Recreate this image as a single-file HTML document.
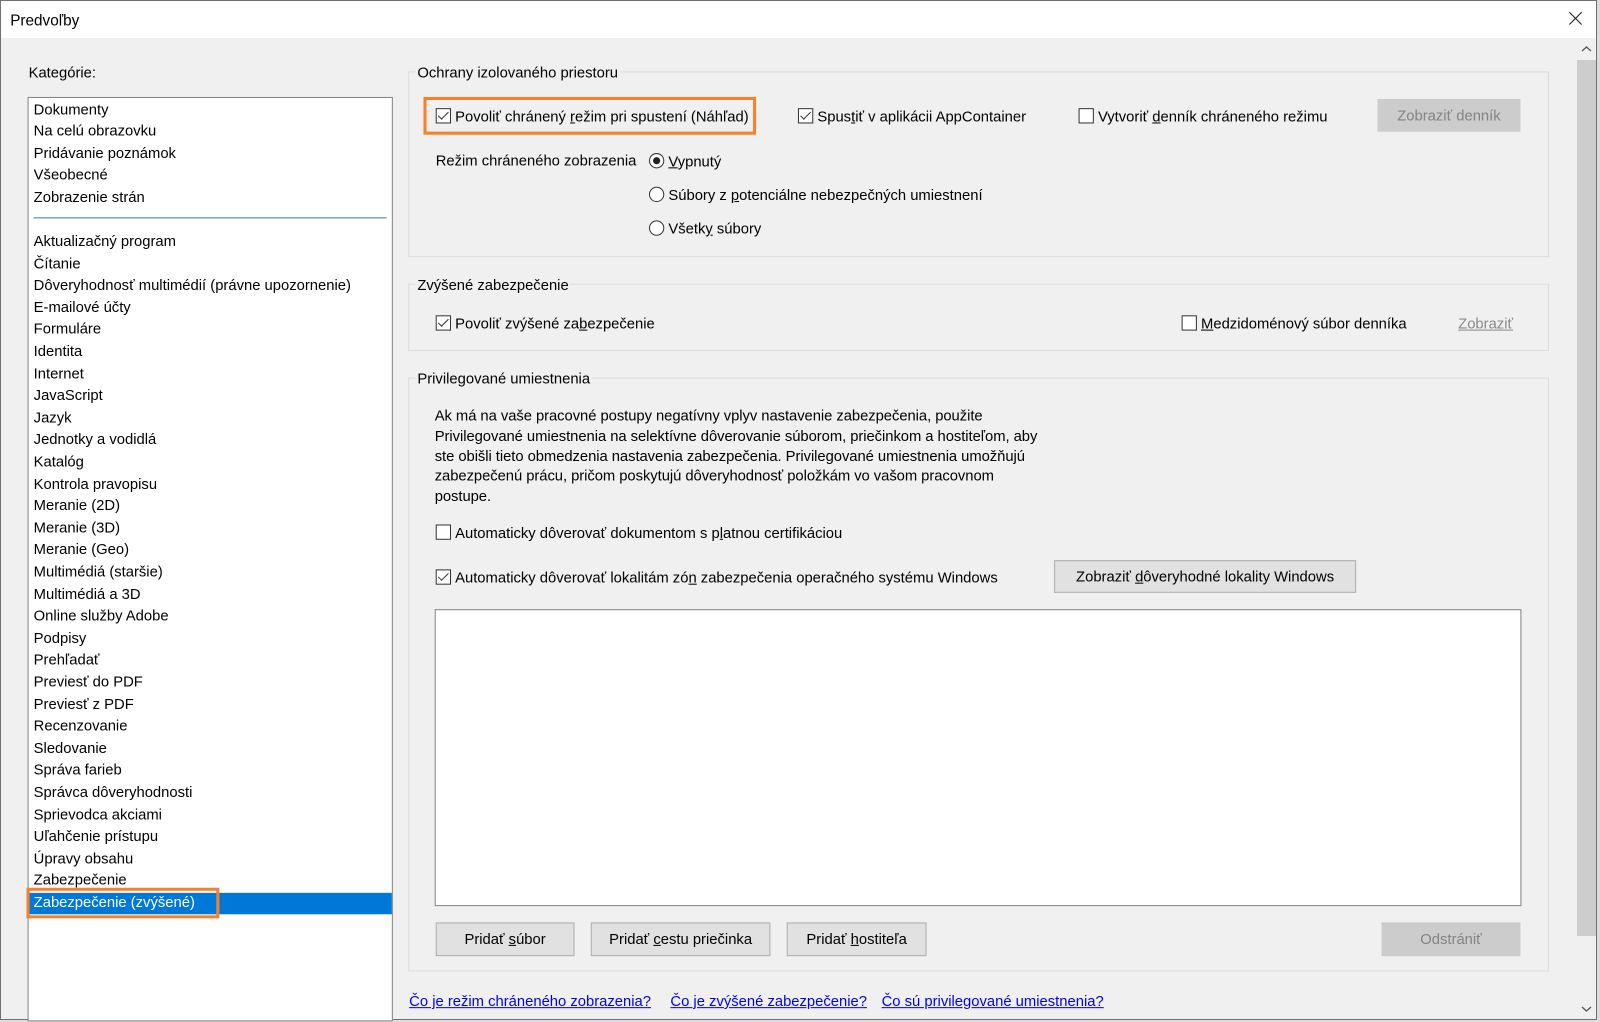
<!DOCTYPE html>
<html><head><meta charset="utf-8">
<style>
*{margin:0;padding:0;box-sizing:border-box}
body{width:1600px;height:1022px;overflow:hidden;background:#dcdcdc;font-family:"Liberation Sans",sans-serif;font-size:14.5px;color:#000;position:relative}
.a{position:absolute;white-space:nowrap;padding-top:2px}
.dlg{position:absolute;left:0;top:0;width:1597px;height:1020px;background:#f0f0f0;border:1px solid #707070}
.title{position:absolute;left:0;top:0;width:1595px;height:37px;background:#fff}
.wrap{position:absolute;left:0;top:0;width:1568px;height:1002px;transform:scale(1.0204);transform-origin:0 0}
.list{position:absolute;left:27px;top:95px;width:358px;height:906px;background:#fff;border:1px solid #828282;padding-top:1.5px}
.list div{height:21.6px;line-height:21.6px;padding-left:5px;white-space:nowrap}
.grp{position:absolute;border:1px solid #dcdcdc}
.gt{position:absolute;background:#f0f0f0;padding:2px 2px 0;line-height:16px;white-space:nowrap}
.cb{position:absolute;width:15px;height:15px;border:1px solid #333;background:#fff}
.cb.on::after{content:"";position:absolute;left:4px;top:0px;width:4px;height:9px;border:solid #333;border-width:0 1.3px 1.3px 0;transform:rotate(45deg)}
.rb{position:absolute;width:15px;height:15px;border:1px solid #333;border-radius:50%;background:#fff}
.rb.on::after{content:"";position:absolute;left:3px;top:3px;width:7px;height:7px;border-radius:50%;background:#222}
.btn{position:absolute;background:#e1e1e1;border:1px solid #adadad;text-align:center;line-height:32px;white-space:nowrap}
.btn.dis{background:#cccccc;border-color:#cccccc;color:#838383}
.lnk{position:absolute;color:#0000ee;text-decoration:underline;white-space:nowrap;padding-top:2px}
u{text-decoration:underline}
</style></head><body>
<div class="dlg">
<div class="title"></div>
<div class="a" style="left:1575px;top:38px;width:20px;height:980px;background:#f0f0f0"></div>
<div class="a" style="left:1576px;top:59px;width:19px;height:876px;background:#cdcdcd"></div>
<svg class="a" style="left:1580px;top:44px;padding:0" width="11" height="8"><path d="M1 6 L5.5 2 L10 6" fill="none" stroke="#555" stroke-width="1.3"/></svg>
<svg class="a" style="left:1580px;top:1004px;padding:0" width="11" height="8"><path d="M1 2 L5.5 6 L10 2" fill="none" stroke="#555" stroke-width="1.3"/></svg>
</div>
<div class="wrap">
<div class="a" style="left:10px;top:10px;font-size:15px">Predvoľby</div>
<svg class="a" style="left:1537px;top:11px;padding:0" width="14" height="14"><path d="M1 1 L13 13 M13 1 L1 13" stroke="#222" stroke-width="1.1"/></svg>

<div class="a" style="left:28px;top:62px">Kategórie:</div>
<div class="list">
 <div>Dokumenty</div>
 <div>Na celú obrazovku</div>
 <div>Pridávanie poznámok</div>
 <div>Všeobecné</div>
 <div>Zobrazenie strán</div>
 <div style="height:10px;padding:0;position:relative"><span style="position:absolute;left:5px;right:5px;top:8px;border-top:1px solid #3a7fa0"></span></div>
 <div style="height:11.6px;padding:0"></div>
 <div>Aktualizačný program</div><div>Čítanie</div><div>Dôveryhodnosť multimédií (právne upozornenie)</div><div>E-mailové účty</div><div>Formuláre</div><div>Identita</div><div>Internet</div><div>JavaScript</div><div>Jazyk</div><div>Jednotky a vodidlá</div><div>Katalóg</div><div>Kontrola pravopisu</div><div>Meranie (2D)</div><div>Meranie (3D)</div><div>Meranie (Geo)</div><div>Multimédiá (staršie)</div><div>Multimédiá a 3D</div><div>Online služby Adobe</div><div>Podpisy</div><div>Prehľadať</div><div>Previesť do PDF</div><div>Previesť z PDF</div><div>Recenzovanie</div><div>Sledovanie</div><div>Správa farieb</div><div>Správca dôveryhodnosti</div><div>Sprievodca akciami</div><div>Uľahčenie prístupu</div><div>Úpravy obsahu</div><div>Zabezpečenie</div>
 <div style="background:#0078d7;color:#fff">Zabezpečenie (zvýšené)</div>
</div>
<div class="a" style="left:26px;top:870px;width:189px;height:30px;border:3px solid #f5822a"></div>

<div class="grp" style="left:400px;top:70px;width:1118px;height:182px"></div>
<div class="gt" style="left:407px;top:62px">Ochrany izolovaného priestoru</div>
<div class="a" style="left:415px;top:95px;width:326px;height:37px;border:3px solid #f5822a"></div>
<div class="cb on" style="left:427px;top:106px"></div>
<div class="a" style="left:446px;top:105px">Povoliť chránený <u>r</u>ežim pri spustení (Náhľad)</div>
<div class="cb on" style="left:782px;top:106px"></div>
<div class="a" style="left:801px;top:105px">Spus<u>t</u>iť v aplikácii AppContainer</div>
<div class="cb" style="left:1057px;top:106px"></div>
<div class="a" style="left:1076px;top:105px">Vytvoriť <u>d</u>enník chráneného režimu</div>
<div class="btn dis" style="left:1350px;top:97px;width:140px;height:32px">Zobraziť denník</div>
<div class="a" style="left:427px;top:148px">Režim chráneného zobrazenia</div>
<div class="rb on" style="left:636px;top:150px"></div>
<div class="a" style="left:655px;top:149px"><u>V</u>ypnutý</div>
<div class="rb" style="left:636px;top:183px"></div>
<div class="a" style="left:655px;top:182px">Súbory z <u>p</u>otenciálne nebezpečných umiestnení</div>
<div class="rb" style="left:636px;top:216px"></div>
<div class="a" style="left:655px;top:215px">Všetk<u>y</u> súbory</div>

<div class="grp" style="left:400px;top:278px;width:1118px;height:66px"></div>
<div class="gt" style="left:407px;top:270px">Zvýšené zabezpečenie</div>
<div class="cb on" style="left:427px;top:309px"></div>
<div class="a" style="left:446px;top:308px">Povoliť zvýšené za<u>b</u>ezpečenie</div>
<div class="cb" style="left:1158px;top:309px"></div>
<div class="a" style="left:1177px;top:308px"><u>M</u>edzidoménový súbor denníka</div>
<div class="a" style="left:1429px;top:308px;color:#8a8a8a;text-decoration:underline">Zobraziť</div>

<div class="grp" style="left:400px;top:370px;width:1118px;height:582px"></div>
<div class="gt" style="left:407px;top:362px">Privilegované umiestnenia</div>
<div class="a" style="left:426px;top:397px;line-height:19.8px;letter-spacing:-0.05px">Ak má na vaše pracovné postupy negatívny vplyv nastavenie zabezpečenia, použite<br>Privilegované umiestnenia na selektívne dôverovanie súborom, priečinkom a hostiteľom, aby<br>ste obišli tieto obmedzenia nastavenia zabezpečenia. Privilegované umiestnenia umožňujú<br>zabezpečenú prácu, pričom poskytujú dôveryhodnosť položkám vo vašom pracovnom<br>postupe.</div>
<div class="cb" style="left:427px;top:514px"></div>
<div class="a" style="left:446px;top:513px">Automaticky dôverovať dokumentom s p<u>l</u>atnou certifikáciou</div>
<div class="cb on" style="left:427px;top:558px"></div>
<div class="a" style="left:446px;top:557px">Automaticky dôverovať lokalitám zó<u>n</u> zabezpečenia operačného systému Windows</div>
<div class="btn" style="left:1033px;top:549px;width:296px;height:32px">Zobraziť <u>d</u>ôveryhodné lokality Windows</div>
<div class="a" style="left:426px;top:597px;width:1065px;height:291px;background:#fff;border:1px solid #828282"></div>
<div class="btn" style="left:427px;top:904px;width:136px;height:33px">Pridať <u>s</u>úbor</div>
<div class="btn" style="left:579px;top:904px;width:176px;height:33px">Pridať <u>c</u>estu priečinka</div>
<div class="btn" style="left:771px;top:904px;width:137px;height:33px">Pridať <u>h</u>ostiteľa</div>
<div class="btn dis" style="left:1354px;top:904px;width:136px;height:33px">Odstrániť</div>

<div class="lnk" style="left:401px;top:972px">Čo je režim chráneného zobrazenia?</div>
<div class="lnk" style="left:657px;top:972px">Čo je zvýšené zabezpečenie?</div>
<div class="lnk" style="left:864px;top:972px">Čo sú privilegované umiestnenia?</div>
</div>
</body></html>
